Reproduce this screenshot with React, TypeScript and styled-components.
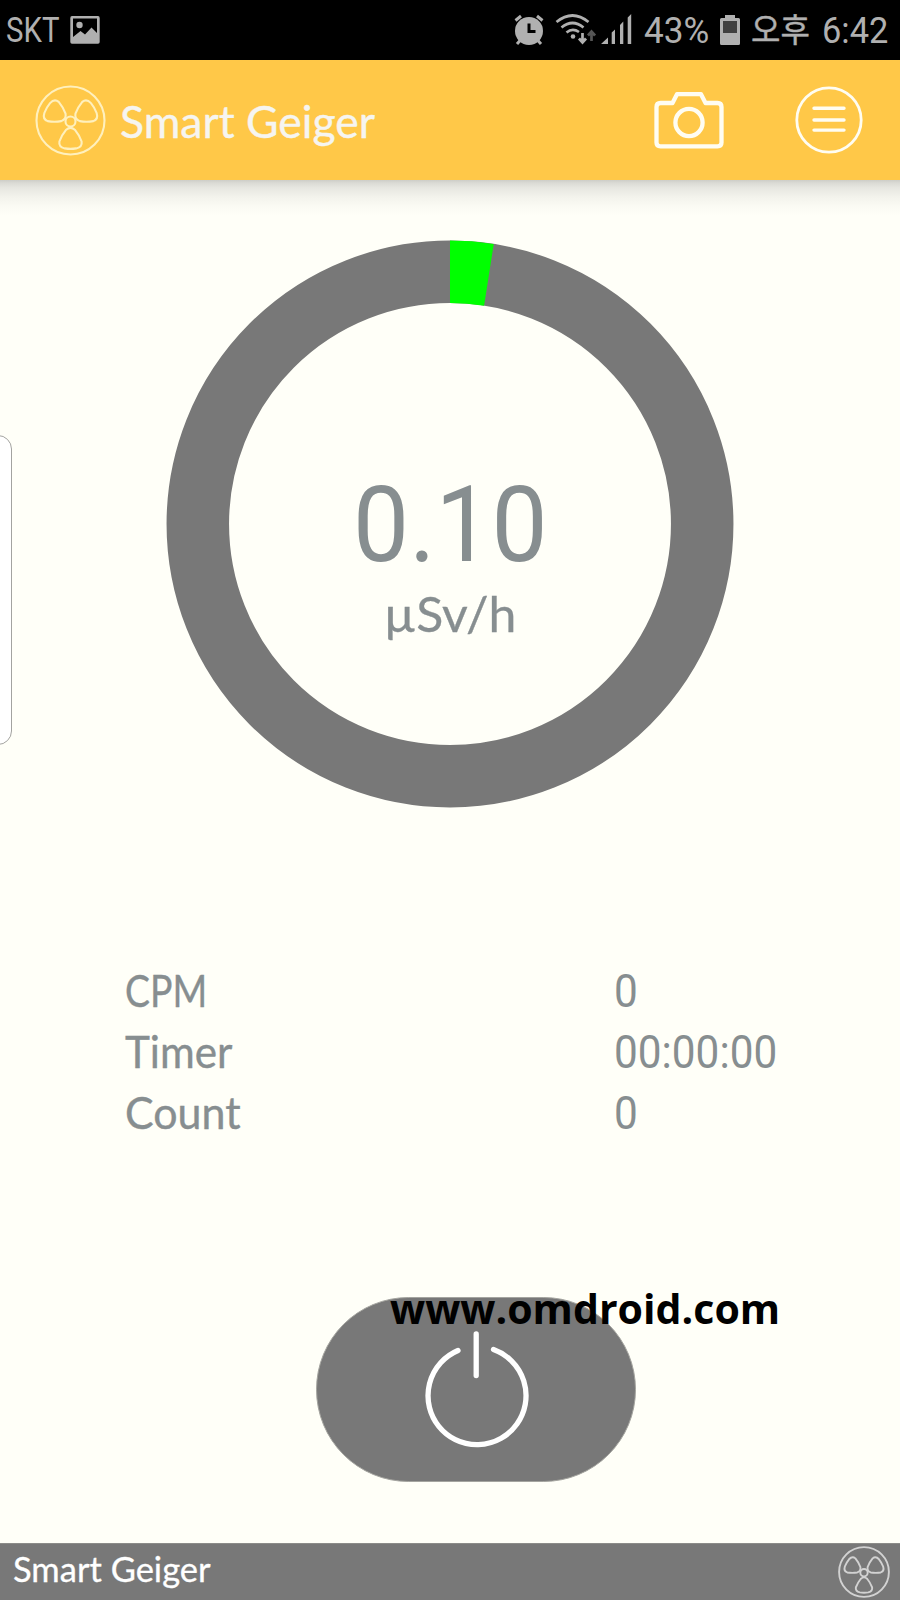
import React from "react";
import styled, { createGlobalStyle } from "styled-components";

const GlobalStyle = createGlobalStyle`
  * { box-sizing: border-box; }
  body { margin: 0; background: #fffff8; }
  svg { display: block; flex: none; }
`;

const ui = `Lato, "Noto Sans CJK KR", sans-serif`;
const numeric = `Roboto, "Noto Sans CJK KR", sans-serif`;

const Screen = styled.div`
  position: relative;
  display: flex;
  flex-direction: column;
  width: 900px;
  height: 1600px;
  overflow: hidden;
  background: #fffff8;
  font-family: ${ui};
`;

const Label = styled.span<{ $size: number; $stretch?: number; $numeric?: boolean; $bold?: number }>`
  display: inline-block;
  white-space: nowrap;
  font-family: ${(p) => (p.$numeric ? numeric : ui)};
  font-size: ${(p) => p.$size}px;
  -webkit-text-stroke: ${(p) => p.$bold ?? 0}px currentColor;
  transform: scaleX(${(p) => p.$stretch ?? 1});
  transform-origin: left center;
`;

const StatusBar = styled.header`
  display: flex;
  align-items: flex-start;
  justify-content: space-between;
  height: 60px;
  flex: none;
  padding-left: 6px;
  background: #000;
  color: #b0b0b0;
  line-height: 62px;
`;

const StatusGroup = styled.div`
  display: flex;
`;

const Slot = styled.div<{ $width: number }>`
  width: ${(p) => p.$width}px;
  flex: none;
`;

const AppBar = styled.div`
  display: flex;
  align-items: center;
  height: 120px;
  flex: none;
  padding: 0 36px 0 35px;
  background: #ffc848;
  color: #f6f5f0;
  line-height: 108px;
`;

const Title = styled.div`
  flex: 1;
  padding: 12px 0 0 14px;
`;

const Actions = styled.div`
  display: flex;
  gap: 70px;
`;

const Main = styled.main`
  display: flex;
  flex: 1;
  flex-direction: column;
  align-items: center;
  background: linear-gradient(#cdcdc7 0, #dbdbd5 3px, #e7e7e1 8px, #f3f3ec 17px, #fbfbf4 27px, #fffff8 36px);
`;

const Gauge = styled.section`
  display: grid;
  width: 568px;
  height: 568px;
  margin-top: 60px;

  > * {
    grid-area: 1 / 1;
  }
`;

const Readout = styled.div`
  display: flex;
  flex-direction: column;
  align-items: center;
  padding-top: 231px;
  color: #878e90;

  span {
    transform-origin: center;
  }
`;

const Value = styled.div`
  height: 110px;
  line-height: 110px;
`;

const Unit = styled.div`
  margin-top: 2px;
  line-height: 60px;
`;

const Stats = styled.dl`
  width: 650px;
  margin: 152px 0 0;
`;

const StatRow = styled.div`
  display: grid;
  grid-template-columns: 489px 1fr;
  align-items: baseline;
  height: 61px;
  line-height: 61px;
  color: #878e90;

  dd {
    margin: 0;
  }
`;

const PowerButton = styled.button`
  width: 320px;
  height: 185px;
  margin: 154px 0 0 51px;
  padding: 0;
  border: 1px solid #a5a5a0;
  border-radius: 93px;
  background: #787878;
`;

const Footer = styled.footer`
  display: flex;
  justify-content: space-between;
  height: 57px;
  flex: none;
  padding: 0 10px 0 13px;
  border-top: 1px solid #8c8c89;
  background: #787878;
  color: #fff;
  line-height: 49px;
`;

const FooterIcon = styled.div`
  padding-top: 2px;
`;

const EdgeHandle = styled.div`
  position: absolute;
  top: 435px;
  left: -20px;
  width: 32px;
  height: 310px;
  border: 1px solid #a3a3a0;
  border-radius: 14px;
  background: #fff;
`;

const Watermark = styled.div`
  position: absolute;
  top: 1278px;
  left: 390px;
  color: #000;
  font-family: "Open Sans", sans-serif;
  font-size: 42px;
  font-weight: 700;
  line-height: 60px;
  white-space: nowrap;
  transform: scaleX(0.978);
  transform-origin: left center;
`;

const BLADE =
  "M66 129.7Q70.3 126 74.6 129.7Q79 135 81.4 141.5Q82.3 147 76 148.4Q70.3 149.4 64.6 148.4Q58.3 147 59.2 141.5Q61.6 135 66 129.7Z";

function Trefoil({ size, color, weight }: { size: number; color: string; weight: number }) {
  return (
    <svg width={size} height={size} viewBox="34.8 85 71 71" fill="none" stroke={color} strokeWidth={weight}>
      <circle cx="70.3" cy="120.5" r="34" />
      <circle cx="70.3" cy="121.5" r="5" />
      {[0, 120, 240].map((a) => (
        <path key={a} d={BLADE} transform={`rotate(${a} 70.3 121.5)`} />
      ))}
    </svg>
  );
}

function PictureIcon() {
  return (
    <svg width="30" height="60" viewBox="70 0 30 60" fill="#b0b0b0">
      <path fillRule="evenodd" d="M72 16H98Q99.700 16 99.700 18V42Q99.700 43.700 98 43.700H72Q70.300 43.700 70.300 42V18Q70.300 16 72 16ZM73 18.500V37L80.500 31L85 34.500L91.500 27.500L97 33V18.500Z" />
      <circle cx="79.500" cy="25" r="3.200" />
    </svg>
  );
}

function AlarmIcon() {
  return (
    <svg width="30" height="60" viewBox="514 0 30 60" fill="none" stroke="#b0b0b0">
      <circle cx="529" cy="31" r="14" fill="#b0b0b0" stroke="none" />
      <path d="M515.500 20.500L521 16M537 16L542.500 20.500M520.500 40L517 44M537.500 40L541 44" strokeWidth="3" />
      <path d="M529 23.500V31.500H535.500" stroke="#000" strokeWidth="3" />
    </svg>
  );
}

function WifiIcon() {
  return (
    <svg width="41" height="60" viewBox="555 0 41 60" fill="none" stroke="#b0b0b0" strokeWidth="2.700">
      <path d="M556.500 22Q572.500 9 588.500 22M561.500 27.500Q572.500 18.500 583.500 27.500M566.500 32.500Q572.500 27.500 579 32" />
      <circle cx="573" cy="36.500" r="2.300" fill="#b0b0b0" stroke="none" />
      <path d="M582.500 33V42M579 38.500L582.500 42.500L586 38.500" />
      <path d="M591.500 41V32M588 35.500L591.500 31.500L595 35.500" stroke="#555" />
    </svg>
  );
}

function SignalIcon() {
  return (
    <svg width="31" height="60" viewBox="601 0 31 60" fill="#b0b0b0">
      <path d="M601 44L608 37.500V44ZM611.700 44V32.500L615 29.500V44ZM620 44V25L623.300 21.500V44ZM627.700 44V17.500L631.200 14V44Z" />
    </svg>
  );
}

function BatteryIcon() {
  return (
    <svg width="20" height="60" viewBox="720 0 20 60">
      <path d="M725 15H735V18H738.500Q740 18 740 19.500V43.500Q740 45 738.500 45H721.500Q720 45 720 43.500V19.500Q720 18 721.500 18H725Z" fill="#b0b0b0" />
      <path d="M723 21H737V33H723Z" fill="#404040" />
    </svg>
  );
}

function CameraIcon() {
  return (
    <svg width="70" height="70" viewBox="654.500 85 70 70" fill="none" stroke="#fffdf2" strokeWidth="4.300">
      <path strokeLinejoin="round" d="M661 103H673L677.500 94.200H701.500L706 103H718Q722 103 722 107V142.500Q722 146.300 718 146.300H661Q657 146.300 657 142.500V107Q657 103 661 103Z" />
      <circle cx="689.500" cy="122.500" r="13.600" />
    </svg>
  );
}

function MenuIcon() {
  return (
    <svg width="70" height="70" viewBox="794.500 85.500 70 70" fill="none" stroke="#fffdf2" strokeLinecap="round">
      <circle cx="829.500" cy="120.500" r="32.200" strokeWidth="2.800" />
      <path d="M814.500 108.700H844.500M814.500 120.500H844.500M814.500 130.600H844.500" strokeWidth="3.400" />
    </svg>
  );
}

function Ring({ share }: { share: number }) {
  const length = 2 * Math.PI * 252.2;
  return (
    <svg width="568" height="568" viewBox="-284 -284 568 568" fill="none" strokeWidth="62.500">
      <circle r="252.2" stroke="#787878" />
      <circle r="252.2" stroke="#00ff00" transform="rotate(-90)" strokeDasharray={`${length * share} ${length}`} />
    </svg>
  );
}

function PowerIcon() {
  return (
    <svg width="318" height="183" viewBox="317 1298 318 183" fill="none" stroke="#fff" strokeWidth="5.300" strokeLinecap="round">
      <path d="M458 1350.500A49 49 0 1 0 493.500 1349.500" />
      <path d="M476.200 1334V1375.500" />
    </svg>
  );
}

const stats = [
  { name: "CPM", value: "0", stretch: 0.85 },
  { name: "Timer", value: "00:00:00", stretch: 0.96 },
  { name: "Count", value: "0", stretch: 0.976 },
];

export default function App() {
  return (
    <Screen>
      <GlobalStyle />
      <StatusBar>
        <StatusGroup>
          <Slot $width={64}><Label $size={35} $numeric $stretch={0.84}>SKT</Label></Slot>
          <PictureIcon />
        </StatusGroup>
        <StatusGroup>
          <Slot $width={41}><AlarmIcon /></Slot>
          <Slot $width={46}><WifiIcon /></Slot>
          <Slot $width={43}><SignalIcon /></Slot>
          <Slot $width={76}><Label $size={37} $numeric $stretch={0.95}>43%</Label></Slot>
          <Slot $width={31}><BatteryIcon /></Slot>
          <Slot $width={71}><Label $size={33} $numeric $stretch={0.97} $bold={0.4}>오후</Label></Slot>
          <Slot $width={78}><Label $size={37} $numeric $stretch={0.93}>6:42</Label></Slot>
        </StatusGroup>
      </StatusBar>
      <AppBar>
        <Trefoil size={71} color="#fff0bd" weight={2.1} />
        <Title><Label $size={44} $stretch={1.012} $bold={0.4}>Smart Geiger</Label></Title>
        <Actions>
          <CameraIcon />
          <MenuIcon />
        </Actions>
      </AppBar>
      <Main>
        <Gauge>
          <Ring share={0.0247} />
          <Readout>
            <Value><Label $size={105} $numeric $stretch={0.95}>0.10</Label></Value>
            <Unit><Label $size={49} $stretch={1.02} $bold={0.3}>µSv/h</Label></Unit>
          </Readout>
        </Gauge>
        <Stats>
          {stats.map((s) => (
            <StatRow key={s.name}>
              <dt><Label $size={44} $stretch={s.stretch} $bold={0.4}>{s.name}</Label></dt>
              <dd><Label $size={46} $numeric $stretch={0.92}>{s.value}</Label></dd>
            </StatRow>
          ))}
        </Stats>
        <PowerButton aria-label="Power">
          <PowerIcon />
        </PowerButton>
      </Main>
      <Footer>
        <Label $size={34} $stretch={1.015} $bold={0.3}>Smart Geiger</Label>
        <FooterIcon>
          <Trefoil size={52} color="#d2d2d2" weight={2.6} />
        </FooterIcon>
      </Footer>
      <EdgeHandle />
      <Watermark>www.omdroid.com</Watermark>
    </Screen>
  );
}
